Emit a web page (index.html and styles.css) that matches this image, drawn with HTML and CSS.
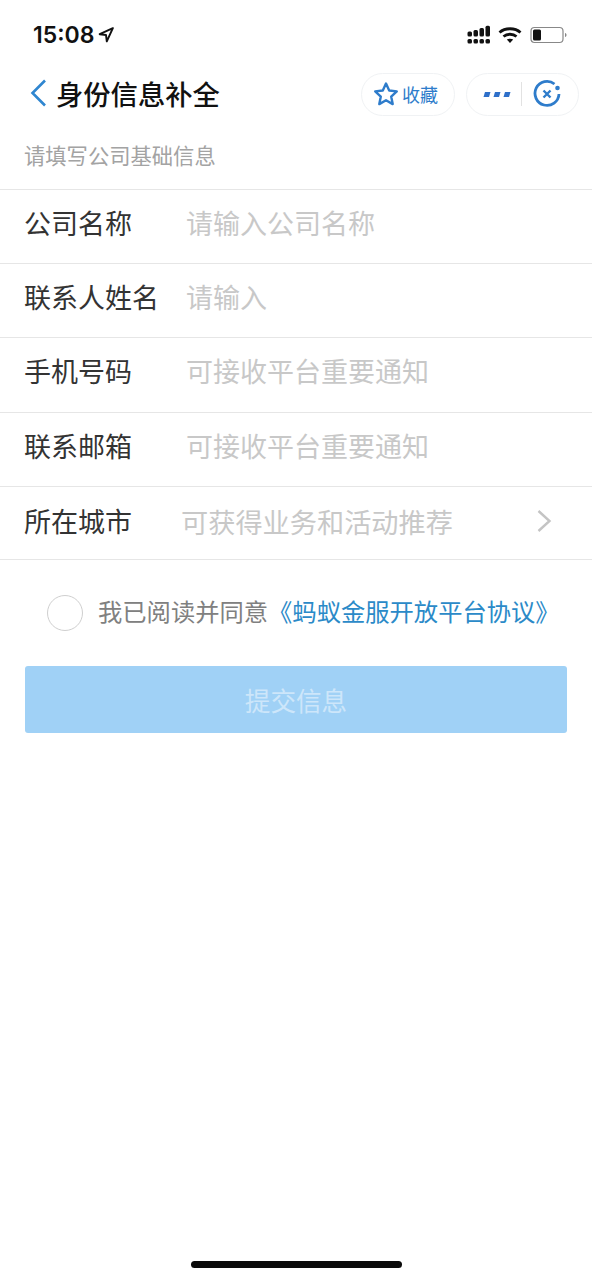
FILE: index.html
```
<!DOCTYPE html>
<html lang="zh-CN">
<head>
<meta charset="utf-8">
<title>身份信息补全</title>
<link rel="stylesheet" href="styles.css">
</head>
<body>
<div class="page">
  <div class="status">
    <div class="time"><span>15:08</span>
      <svg class="loc" width="16" height="16" viewBox="0 0 14 14"><path d="M13 1 1.500 6.300 7 7l.7 5.500z" fill="none" stroke="#111" stroke-width="1.700" stroke-linejoin="round"/></svg>
    </div>
    <div class="status-right">
      <svg width="24" height="20" viewBox="0 0 24 20" fill="#111"><rect x=".5" y="6.500" width="4.500" height="5" rx="1.500"/><rect x="6.500" y="5" width="4.500" height="6.500" rx="1.500"/><rect x="12.500" y="3" width="4.500" height="8.500" rx="1.500"/><rect x="18.500" y=".8" width="4.500" height="10.700" rx="1.500"/><rect x=".5" y="14" width="4.500" height="4.500" rx="1.500"/><rect x="6.500" y="14" width="4.500" height="4.500" rx="1.500"/><rect x="12.500" y="14" width="4.500" height="4.500" rx="1.500"/><rect x="18.500" y="14" width="4.500" height="4.500" rx="1.500"/></svg>
      <svg width="24" height="18" viewBox="0 0 24 18" fill="none" stroke="#111" stroke-width="2.800"><path d="M1.500 6.500C7 1.500 17 1.500 22.500 6.500"/><path d="M5.500 10.500C9 7.500 15 7.500 18.500 10.500"/><path d="M12 17 8.800 13.600C10.500 12.300 13.500 12.300 15.200 13.600z" fill="#111" stroke="none"/></svg>
      <svg class="batt" width="38" height="18" viewBox="0 0 38 18"><rect x="1" y="1.500" width="32" height="15" rx="3.500" fill="none" stroke="#888" stroke-width="1.200"/><rect x="3" y="3.500" width="8" height="11" rx="1.500" fill="#111"/><path d="M35 7v4c1-.3 1.500-1 1.500-2S36 7.300 35 7z" fill="#888"/></svg>
    </div>
  </div>
  <div class="nav">
    <svg class="back" width="20" height="30" viewBox="0 0 20 30"><path d="M16 2.500 3.500 15 16 27.500" fill="none" stroke="#2f86d0" stroke-width="2.600"/></svg>
    <div class="nav-title">身份信息补全</div>
    <div class="pill pill-fav">
      <svg width="26" height="26" viewBox="0 0 26 26"><path d="m13 2.500 3.200 7 7.600.9-5.600 5.200 1.500 7.500L13 19.300l-6.700 3.800 1.500-7.500-5.600-5.200 7.600-.9z" fill="none" stroke="#2e7ccb" stroke-width="2.400" stroke-linejoin="round"/></svg>
      <span>收藏</span>
    </div>
    <div class="pill pill-menu">
      <svg width="28" height="7" viewBox="0 0 28 7" fill="#2e6fc9"><path d="M2 1h5.500L6 6H.5z"/><path d="M12 1h5.500L16 6h-5.500z"/><path d="M22 1h5.500L26 6h-5.500z"/></svg>
      <i class="sep"></i>
      <svg width="30" height="30" viewBox="0 0 30 30"><path d="M22.500 5A12 12 0 1 0 27 15" fill="none" stroke="#2e7ccb" stroke-width="2.800"/><circle cx="25.500" cy="9" r="2.300" fill="#2e7ccb"/><path d="m11.500 11.500 7 7m0-7-7 7" stroke="#2e7ccb" stroke-width="2.400"/></svg>
    </div>
  </div>
  <div class="section-title">请填写公司基础信息</div>
  <div class="form">
    <div class="row"><div class="label">公司名称</div><div class="ph">请输入公司名称</div></div>
    <div class="row"><div class="label">联系人姓名</div><div class="ph">请输入</div></div>
    <div class="row"><div class="label">手机号码</div><div class="ph">可接收平台重要通知</div></div>
    <div class="row"><div class="label">联系邮箱</div><div class="ph">可接收平台重要通知</div></div>
    <div class="row row-city"><div class="label">所在城市</div><div class="ph ph-city">可获得业务和活动推荐</div>
      <svg class="chev" width="16" height="24" viewBox="0 0 16 24"><path d="m2.500 2 11 10-11 10" fill="none" stroke="#c4c4c4" stroke-width="2.400"/></svg>
    </div>
  </div>
  <div class="agree">
    <i class="radio"></i>
    <span class="agree-text">我已阅读并同意</span><span class="agree-link">《蚂蚁金服开放平台协议》</span>
  </div>
  <div class="submit">提交信息</div>
  <div class="spacer"></div>
  <div class="home"></div>
</div>
</body>
</html>
```
FILE: styles.css
```
* { box-sizing: border-box; }
html, body { margin: 0; padding: 0; background: #fff; }
body { font-family: "Noto Sans CJK SC", "Liberation Sans", sans-serif; }
.page { width: 592px; height: 1280px; display: flex; flex-direction: column; overflow: hidden; }
.status { height: 66px; flex: none; padding: 20px 25px 0 33px; display: flex; justify-content: space-between; align-items: flex-start; }
.time { display: flex; align-items: center; gap: 4px; height: 30px; font-family: Inter, "Liberation Sans", sans-serif; font-size: 23px; font-weight: 600; color: #111; }
.status-right { display: flex; align-items: center; gap: 7px; height: 30px; margin-right: -1px; }
.batt { margin-left: 1px; }
.nav { height: 54px; flex: none; padding: 0 13px 0 29px; display: flex; align-items: center; }
.back { flex: none; }
.nav-title { margin-left: 7px; font-size: 27.300px; font-weight: 500; color: #111; width: 305px; flex: none; line-height: 40px; white-space: nowrap; }
.pill { height: 43px; margin-top: 2px; border: 1px solid #f0f2f4; border-radius: 22px; display: flex; align-items: center; flex: none; background: #fff; }
.pill-fav { width: 94px; padding-left: 11px; gap: 3px; font-size: 18px; color: #2e7ccb; }
.pill-menu { width: 113px; margin-left: 11px; padding-left: 16px; }
.sep { width: 1px; height: 24px; background: #e2e2e2; margin: 0 10px 0 10px; flex: none; }
.section-title { height: 70px; flex: none; padding: 17px 0 0 24px; font-size: 21.300px; line-height: 36px; color: #a3a3a3; border-bottom: 1px solid #e6e6e6; white-space: nowrap; }
.row { height: 74.200px; border-bottom: 1px solid #e6e6e6; display: flex; align-items: center; padding: 0 0 7px 24px; }
.row-city { padding-bottom: 3px; height: 73px; }
.label { width: 162px; flex: none; font-size: 27px; color: #333; line-height: 40px; white-space: nowrap; }
.ph { font-size: 27px; color: #c8c8c8; line-height: 40px; white-space: nowrap; }
.ph-city { margin-left: -5px; width: 355px; flex: none; font-size: 27.200px; }
.chev { flex: none; }
.agree { height: 106px; flex: none; display: flex; align-items: center; padding: 0 0 4px 47px; }
.radio { width: 36px; height: 36px; border: 1.500px solid #cfcfcf; border-radius: 50%; flex: none; margin: 4px 15px 0 0; }
.agree-text { font-size: 24.300px; color: #808080; white-space: nowrap; }
.agree-link { font-size: 24.300px; color: #2b8ac8; white-space: nowrap; }
.submit { flex: none; height: 67px; margin: 0 25px; border-radius: 3px; background: #a0d1f6; color: #cde6fa; font-size: 25.600px; display: flex; align-items: center; justify-content: center; }
.spacer { flex: 1; }
.home { flex: none; width: 211px; height: 7px; border-radius: 4px; background: #0a0a0a; margin: 0 auto 12px; }
```
